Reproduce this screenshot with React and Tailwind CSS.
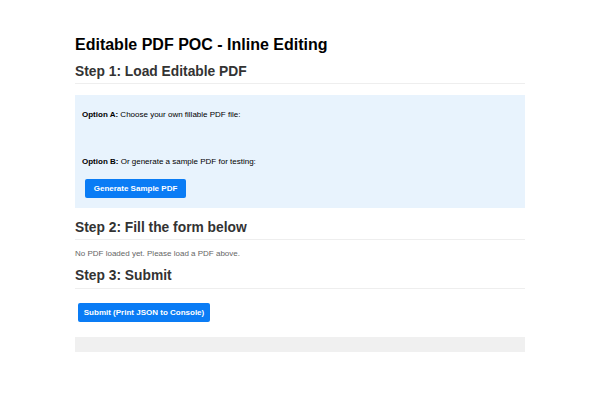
export default function App() {
  return (
    <div className="min-h-[400px] bg-white font-['Liberation_Sans',Arial,sans-serif]">
      <div className="mx-auto w-[450px] pt-[36px]">
        <h1 className="text-[16px] leading-[18px] font-bold text-black">
          Editable PDF POC - Inline Editing
        </h1>

        {/* Step 1 */}
        <h2 className="mt-[10px] border-b border-[#eeeeee] pb-[3px] text-[13.8px] leading-[16px] font-bold text-[#333]">
          Step 1: Load Editable PDF
        </h2>
        <div className="mt-[11px] h-[113px] bg-[#e8f3fd] px-[7px] pt-[15px]">
          <p className="text-[8px] leading-[9px] text-black">
            <b>Option A:</b> Choose your own fillable PDF file:
          </p>
          <div className="h-[38px]" />
          <p className="text-[8px] leading-[9px] text-black">
            <b>Option B:</b> Or generate a sample PDF for testing:
          </p>
          <button className="mt-[13px] ml-[3px] h-[19px] w-[101px] rounded-[2px] bg-[#0a7cf5] text-[8px] font-bold text-white">
            Generate Sample PDF
          </button>
        </div>

        {/* Step 2 */}
        <h2 className="mt-[12px] border-b border-[#eeeeee] pb-[3px] text-[13.8px] leading-[16px] font-bold text-[#333]">
          Step 2: Fill the form below
        </h2>
        <p className="mt-[9px] text-[8px] leading-[9px] text-[#666]">
          No PDF loaded yet. Please load a PDF above.
        </p>

        {/* Step 3 */}
        <h2 className="mt-[10px] border-b border-[#eeeeee] pb-[4px] text-[13.8px] leading-[16px] font-bold text-[#333]">
          Step 3: Submit
        </h2>
        <button className="mt-[14px] ml-[3px] h-[19px] w-[132px] rounded-[2px] bg-[#0a7cf5] text-[8px] font-bold text-white">
          Submit (Print JSON to Console)
        </button>
        <div className="mt-[15px] h-[15px] bg-[#f0f0f0]" />
      </div>
    </div>
  );
}
